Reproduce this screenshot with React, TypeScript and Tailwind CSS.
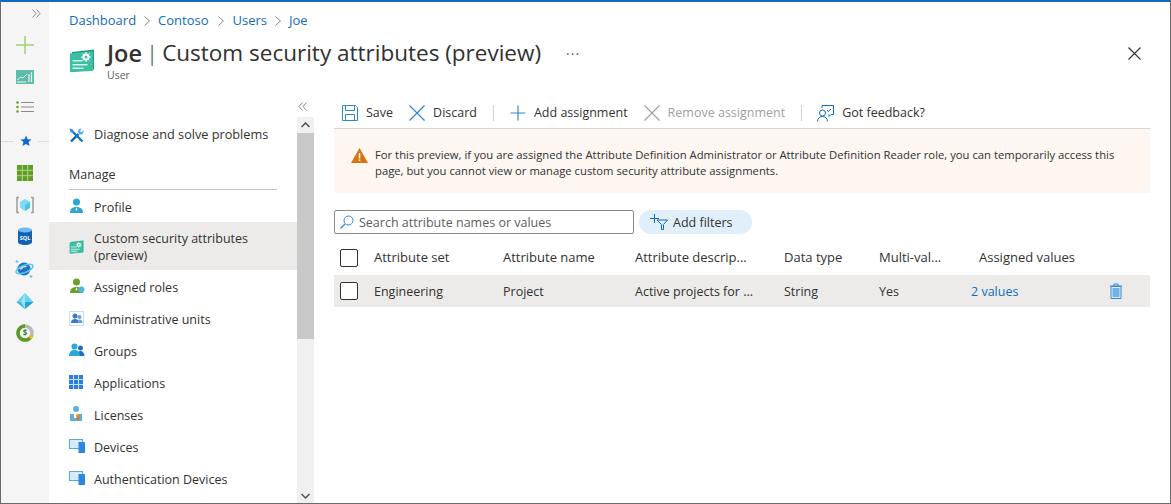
import { ReactNode } from "react";

const font = { fontFamily: '"Open Sans", "Noto Sans", sans-serif' };

function Chevron({ className = "mx-[7px]" }: { className?: string }) {
  return (
    <svg width="8" height="12" viewBox="0 0 8 12" className={className}>
      <path d="M1.5 1.5 6.5 6l-5 4.5" fill="none" stroke="#8a8886" strokeWidth="1" />
    </svg>
  );
}

function CardIcon({ size = 26 }: { size?: number }) {
  return (
    <svg width={size} height={size} viewBox="0 0 26 26">
      <path d="M3 5 25 2.5v20L3 25z" fill="#1c9a85" />
      <path d="M1 6.5 24 4v20L1 25z" fill="#3cc0a4" />
      <rect x="3.500" y="13" width="10" height="1.500" fill="#d8f5ee" />
      <rect x="3.500" y="17" width="15" height="1.500" fill="#d8f5ee" />
      <rect x="3.500" y="20.500" width="11" height="1.500" fill="#d8f5ee" />
      <circle cx="17" cy="10" r="3.500" fill="#fff" />
      <path d="M17 5v10M12 10h10M13.500 6.500l7 7M20.500 6.500l-7 7" stroke="#fff" strokeWidth="1" />
      <circle cx="17" cy="10" r="1.500" fill="#3cc0a4" />
    </svg>
  );
}

function RailIcons() {
  return (
    <div className="flex flex-col items-center">
      <div className="h-[30px] w-full pt-[7px] pl-[31px]">
        <svg width="9" height="9" viewBox="0 0 9 9">
          <path d="M.5.500 4 4.500.5 8.500M4.500.500 8 4.500l-3.500 4" fill="none" stroke="#8a8a8a" />
        </svg>
      </div>
      <div className="h-[32px] pt-[4px]">
        <svg width="18" height="18" viewBox="0 0 18 18">
          <path d="M9 0v18M0 9h18" stroke="#a3cf7a" strokeWidth="1.500" />
        </svg>
      </div>
      <div className="h-[30px] pt-[6px]">
        <svg width="18" height="14" viewBox="0 0 18 14">
          <rect width="18" height="14" fill="#5fbcaa" />
          <path d="M1 10l4-3 2 1 4-4" stroke="#d8f3ee" fill="none" />
          <path d="M1 12h9M13 12V4M15.500 12V2" stroke="#e6f7f3" strokeWidth="1.200" />
        </svg>
      </div>
      <div className="h-[32px] pt-[7px]">
        <svg width="18" height="12" viewBox="0 0 18 12">
          <path d="M5 1.500h13M5 6h13M5 10.500h13" stroke="#8a8a8a" strokeWidth="1.200" />
          <circle cx="1.500" cy="1.500" r="1.300" fill="#6a9e2f" />
          <circle cx="1.500" cy="6" r="1.300" fill="#6a9e2f" />
          <circle cx="1.500" cy="10.500" r="1.300" fill="#6a9e2f" />
        </svg>
      </div>
      <div className="flex h-[30px] w-full items-center">
        <div className="h-px w-[13px] bg-[#dcdcdc]" />
        <svg width="12" height="12" viewBox="0 0 12 12" className="mx-[6px]">
          <path d="M6 .5l1.600 3.700 4 .3-3 2.600.9 3.900L6 9l-3.500 2 .9-3.900-3-2.600 4-.3z" fill="#0f6cc9" />
        </svg>
        <div className="h-px flex-1 bg-[#dcdcdc]" />
      </div>
      <div className="h-[32px] pt-[9px]">
        <svg width="16" height="16" viewBox="0 0 16 16">
          <rect width="16" height="16" fill="#5e9e22" />
          <path d="M5.300 0v16M10.700 0v16M0 5.300h16M0 10.700h16" stroke="#b6d68d" />
        </svg>
      </div>
      <div className="h-[33px] pt-[8px]">
        <svg width="18" height="18" viewBox="0 0 18 18">
          <path d="M3 1.500H1v15h2M15 1.500h2v15h-2" fill="none" stroke="#9a9a9a" strokeWidth="1.500" />
          <path d="M9 3l5 2.800v6L9 15l-5-3.200v-6z" fill="#7fdcf5" />
          <path d="M9 9l5-3.200v6L9 15z" fill="#4cc3e8" />
        </svg>
      </div>
      <div className="h-[33px] pt-[6px]">
        <svg width="14" height="18" viewBox="0 0 14 18">
          <path d="M0 3v12c0 1.600 3 3 7 3s7-1.400 7-3V3z" fill="#0f62b5" />
          <ellipse cx="7" cy="3" rx="7" ry="2.500" fill="#6fbdf0" />
          <text x="7" y="12.500" textAnchor="middle" fontSize="5.500" fontWeight="700" fill="#fff">SQL</text>
        </svg>
      </div>
      <div className="h-[32px] pt-[5px]">
        <svg width="20" height="20" viewBox="0 0 20 20">
          <circle cx="9" cy="10" r="6.500" fill="#1f6fc4" />
          <path d="M4 9c2-3 6-3 8-1-3 0-5 1-6 3z" fill="#e8e8e8" />
          <ellipse cx="9.500" cy="10" rx="9" ry="3.500" transform="rotate(-22 9.500 10)" fill="none" stroke="#50c8ee" strokeWidth="1.500" />
          <path d="M2 1v3M.5 2.500h3M16 16v3M14.500 17.500h3" stroke="#50c8ee" />
        </svg>
      </div>
      <div className="h-[32px] pt-[6px]">
        <svg width="18" height="18" viewBox="0 0 18 18">
          <path d="M9 1 17.500 10 9 17 .5 10z" fill="#6ad2f3" />
          <path d="M9 1 5 10l4 7z" fill="#9fe4f8" />
          <path d="M.5 10H5l4 7z" fill="#3fb6e2" />
          <path d="M17.500 10 9 17V10z" fill="#2a9fd8" />
        </svg>
      </div>
      <div className="h-[32px] pt-[6px]">
        <svg width="18" height="18" viewBox="0 0 18 18">
          <circle cx="9" cy="9" r="7" fill="none" stroke="#b9b9b9" strokeWidth="3.500" />
          <path d="M9 2a7 7 0 0 0-2 13.700A7 7 0 0 0 14 14" fill="none" stroke="#5c9a1f" strokeWidth="3.500" />
          <path d="M14 14a7 7 0 0 0 2-3" fill="none" stroke="#f2b90f" strokeWidth="3.500" />
          <text x="9" y="12" textAnchor="middle" fontSize="8" fontWeight="700" fill="#3a7d44">$</text>
        </svg>
      </div>
    </div>
  );
}

function Person({ color, accent }: { color: string; accent?: ReactNode }) {
  return (
    <svg width="16" height="16" viewBox="0 0 16 16">
      <circle cx="7.500" cy="4" r="3.500" fill={color} />
      <path d="M1 15c0-4 2.500-6 6.500-6s6.500 2 6.500 6z" fill={color} />
      <path d="M7.500 9.500 6.500 11l1 2 1-2z" fill="#fff" />
      {accent}
    </svg>
  );
}

function Screen() {
  return (
    <svg width="16" height="14" viewBox="0 0 16 14">
      <rect x="0" y="0" width="14" height="10" fill="#5aa7e8" />
      <rect x="1" y="1" width="12" height="8" fill="#d6ecfb" />
      <rect x="9.500" y="3" width="6.500" height="11" rx="0.500" fill="#2f86e0" />
    </svg>
  );
}

const navItems: { label: ReactNode; icon: ReactNode; h?: string; active?: boolean }[] = [
  { label: "Profile", icon: <Person color="#2aa7d8" /> },
  {
    label: (
      <>
        Custom security attributes
        <br />
        (preview)
      </>
    ),
    icon: <CardIcon size={15} />,
    h: "h-[48px]",
    active: true,
  },
  {
    label: "Assigned roles",
    icon: <Person color="#6c9f2a" accent={<circle cx="12.500" cy="11.500" r="3" fill="#4bb8e6" />} />,
  },
  {
    label: "Administrative units",
    icon: (
      <svg width="15" height="15" viewBox="0 0 15 15">
        <rect x=".5" y=".5" width="14" height="14" fill="none" stroke="#8fb6e4" strokeDasharray="1 1" />
        <circle cx="6" cy="5" r="2.500" fill="#3c78c4" />
        <path d="M2 12c0-3 1.500-4 4-4s4 1 4 4z" fill="#3c78c4" />
        <circle cx="10.500" cy="6" r="2" fill="#6d9dd6" />
        <path d="M9 12c0-2 .5-3.500 1.500-3.500 2 0 3 1.500 3 3.500z" fill="#6d9dd6" />
      </svg>
    ),
  },
  {
    label: "Groups",
    icon: (
      <svg width="16" height="14" viewBox="0 0 16 14">
        <circle cx="11.500" cy="5" r="2.500" fill="#1e6fc0" />
        <path d="M8 13c0-3 1.500-5 3.500-5s4 2 4 5z" fill="#1e6fc0" />
        <circle cx="5.500" cy="3.500" r="3" fill="#2aa7d8" />
        <path d="M0 13c0-4 2-6 5.500-6s5.500 2 5.500 6z" fill="#2aa7d8" />
      </svg>
    ),
  },
  {
    label: "Applications",
    icon: (
      <svg width="14" height="14" viewBox="0 0 14 14">
        <rect width="14" height="14" fill="#2a7fe0" />
        <path d="M4.500 0v14M9.500 0v14M0 4.500h14M0 9.500h14" stroke="#cfe3f8" />
      </svg>
    ),
  },
  {
    label: "Licenses",
    icon: (
      <svg width="14" height="16" viewBox="0 0 14 16">
        <circle cx="7" cy="3" r="3" fill="#5fb0d8" />
        <path d="M1 15V8h12v7z" fill="#5fb0d8" />
        <path d="M5 8h4v4H5z" fill="#fff" />
        <circle cx="9" cy="10" r="2" fill="#e88a2a" />
        <path d="M8 11h2v4l-1-1-1 1z" fill="#d8701a" />
      </svg>
    ),
  },
  { label: "Devices", icon: <Screen /> },
  { label: "Authentication Devices", icon: <Screen /> },
];

function Sidebar() {
  return (
    <div className="flex w-[265px] shrink-0">
      <div className="flex min-w-0 flex-1 flex-col">
        <div className="h-[24px]" />
        <div className="flex h-[32px] items-center pl-[20px] text-[12.7px] text-[#323130]">
          <svg width="15" height="15" viewBox="0 0 15 15" className="mr-[10px]">
            <path d="M2 13.500 9.500 6" stroke="#1565b0" strokeWidth="2.400" />
            <path d="M13.500 13.500 4 4" stroke="#1a74c4" strokeWidth="2.400" />
            <path d="M.5.500 4 1.500 5 4 3.500 5 1.500 4z" fill="#2d8fd8" />
            <path d="M14.500 1.500c-.5 2-1.500 2.500-2.500 2.500l-1-1 1.500-2.500c-2-.5-4 1.500-3.500 4l2 2c2.500.5 4-1 3.500-5z" fill="#4fb3ea" />
          </svg>
          Diagnose and solve problems
        </div>
        <div className="mx-[20px] mt-[15px] flex h-[24px] items-start border-b border-[#c8c6c4] text-[12.5px] font-medium text-[#323130]">
          Manage
        </div>
        <div className="flex flex-col">
          {navItems.map((item, i) => (
            <div
              key={i}
              className={`flex ${item.h ?? "h-[32px]"} items-center pl-[20px] text-[12.5px] leading-[17px] text-[#323130] ${
                item.active ? "bg-[#edebe9]" : ""
              }`}
            >
              <span className="flex w-[25px] shrink-0 items-center">{item.icon}</span>
              <span className="pt-[2px]">{item.label}</span>
            </div>
          ))}
        </div>
      </div>
      <div className="flex w-[17px] shrink-0 flex-col">
        <div className="h-[22px] pt-[7px] pl-[1px]">
          <svg width="9" height="9" viewBox="0 0 9 9">
            <path d="M4.500.500 1 4.500l3.500 4M8.500.500 5 4.500l3.500 4" fill="none" stroke="#8a8a8a" />
          </svg>
        </div>
        <div className="flex flex-1 flex-col bg-[#f0f0f0]">
          <div className="flex h-[16px] items-center justify-center">
            <svg width="9" height="6" viewBox="0 0 9 6">
              <path d="M.5 5 4.500 1l4 4" fill="none" stroke="#505050" strokeWidth="1.500" />
            </svg>
          </div>
          <div className="h-[206px] bg-[#c8c8c8]" />
          <div className="flex-1" />
          <div className="flex h-[14px] items-center justify-center">
            <svg width="9" height="6" viewBox="0 0 9 6">
              <path d="M.5 1 4.500 5l4-4" fill="none" stroke="#505050" strokeWidth="1.500" />
            </svg>
          </div>
        </div>
      </div>
    </div>
  );
}

function ToolButton({ icon, label, muted }: { icon: ReactNode; label: string; muted?: boolean }) {
  return (
    <div className={`flex items-center text-[12.5px] ${muted ? "text-[#a19f9d]" : "text-[#323130]"}`}>
      <span className="mr-[8px] flex">{icon}</span>
      {label}
    </div>
  );
}

function Toolbar() {
  return (
    <div className="flex h-[34px] items-center border-b border-[#d8d6d4] pt-[3px] pl-[8px]">
      <ToolButton
        label="Save"
        icon={
          <svg width="16" height="16" viewBox="0 0 16 16">
            <path d="M.5.500h13l2 2v13H.5z" fill="none" stroke="#2b88d8" />
            <path d="M3.500.500v5h9v-5M3.500 15.500v-6h9v6" fill="none" stroke="#2b88d8" />
          </svg>
        }
      />
      <div className="ml-[16px]">
        <ToolButton
          label="Discard"
          icon={
            <svg width="16" height="16" viewBox="0 0 16 16">
              <path d="M.5.500l15 15M15.500.500l-15 15" stroke="#2b88d8" strokeWidth="1.200" />
            </svg>
          }
        />
      </div>
      <div className="mx-[16px] h-[16px] w-px bg-[#d2d0ce]" />
      <ToolButton
        label="Add assignment"
        icon={
          <svg width="16" height="16" viewBox="0 0 16 16">
            <path d="M8 .5v15M.5 8h15" stroke="#2b88d8" strokeWidth="1.200" />
          </svg>
        }
      />
      <div className="ml-[16px]">
        <ToolButton
          muted
          label="Remove assignment"
          icon={
            <svg width="16" height="16" viewBox="0 0 16 16">
              <path d="M.5.500l15 15M15.500.500l-15 15" stroke="#a19f9d" strokeWidth="1.200" />
            </svg>
          }
        />
      </div>
      <div className="mr-[15px] ml-[16px] h-[16px] w-px bg-[#d2d0ce]" />
      <ToolButton
        label="Got feedback?"
        icon={
          <svg width="17" height="17" viewBox="0 0 17 17">
            <circle cx="5.500" cy="8" r="3" fill="none" stroke="#0f6cbd" />
            <path d="M.5 16.500c0-3 2-5 5-5s5 2 5 5" fill="none" stroke="#0f6cbd" />
            <path d="M5 3V.5h11.500v9H14l-2 2v-2" fill="none" stroke="#0f6cbd" />
            <path d="M10 5l1.500 1.500L14 4" fill="none" stroke="#0f6cbd" />
          </svg>
        }
      />
    </div>
  );
}

function Checkbox() {
  return <div className="h-[18px] w-[18px] rounded-[2px] border border-[#323130] bg-white" />;
}

function Table() {
  const cols = "grid grid-cols-[40px_129px_132px_149px_95px_92px_138px_1fr] items-center";
  return (
    <div>
      <div className={`${cols} h-[41px] pt-[6px] text-[13px] font-medium text-[#323130]`}>
        <div className="pl-[6px]">
          <Checkbox />
        </div>
        <div>Attribute set</div>
        <div>Attribute name</div>
        <div>Attribute descrip...</div>
        <div>Data type</div>
        <div>Multi-val...</div>
        <div className="col-span-2 pl-[8px]">Assigned values</div>
      </div>
      <div className={`${cols} h-[32px] bg-[#edebe9] text-[12.5px] text-[#323130]`}>
        <div className="pl-[6px]">
          <Checkbox />
        </div>
        <div className="pt-[2px]">Engineering</div>
        <div className="pt-[2px]">Project</div>
        <div className="pt-[2px]">Active projects for ...</div>
        <div className="pt-[2px]">String</div>
        <div className="pt-[2px]">Yes</div>
        <div className="pt-[2px] text-[#0f6cbd]">2 values</div>
        <div className="flex">
          <svg width="14" height="16" viewBox="0 0 14 16">
            <path d="M1 3h12M5 3V1h4v2" fill="none" stroke="#2b88d8" />
            <path d="M2 3.500h10V15.500H2z" fill="none" stroke="#2b88d8" />
            <rect x="3.500" y="5" width="7" height="9" fill="#70b1e6" />
          </svg>
        </div>
      </div>
    </div>
  );
}

export default function App() {
  return (
    <div
      style={font}
      className="flex h-[504px] w-[1171px] overflow-hidden border-t-2 border-r border-b border-l border-t-[#0f6cbd] border-r-[#6b6b6b] border-b-[#6b6b6b] border-l-[#6b6b6b] bg-white"
    >
      <div className="w-[48px] shrink-0 bg-[#f5f5f5]">
        <RailIcons />
      </div>
      <div className="flex min-w-0 flex-1 flex-col">
        <div className="relative h-[93px] shrink-0 pl-[20px]">
          <div className="flex h-[36px] items-center pt-[2px] text-[13px] text-[#0f6cbd]">
            Dashboard
            <Chevron />
            Contoso
            <Chevron className="mx-[8px]" />
            Users
            <Chevron className="mx-[7px]" />
            Joe
          </div>
          <div className="flex">
            <div className="pt-[9px]">
              <CardIcon />
            </div>
            <div className="ml-[12px]">
              <div className="flex items-center text-[22.5px] leading-[30px] text-[#323130]">
                <span className="text-[23.5px] font-semibold">Joe</span>
                <span className="mx-[4px] font-light">|</span>
                <span>Custom security attributes (preview)</span>
                <span className="ml-[25px] -mt-[6px] text-[14px] tracking-[1px] text-[#605e5c]">...</span>
              </div>
              <div className="text-[10.5px] leading-[14px] text-[#605e5c]">User</div>
            </div>
          </div>
          <div className="absolute top-[45px] right-[29px]">
            <svg width="13" height="13" viewBox="0 0 13 13">
              <path d="M.5.500l12 12M12.500.500l-12 12" stroke="#323130" strokeWidth="1.100" />
            </svg>
          </div>
        </div>
        <div className="flex min-h-0 flex-1">
          <Sidebar />
          <div className="min-w-0 flex-1 pr-[20px] pl-[20px]">
            <Toolbar />
            <div className="flex h-[64px] items-start bg-[#fdf6f1] pt-[18px] pl-[17px]">
              <svg width="17" height="15" viewBox="0 0 17 15" className="mt-[1px] shrink-0">
                <path d="M8.500 0 17 15H0z" fill="#d9730d" />
                <path d="M7.700 5h1.600v5.500H7.700zM7.700 11.500h1.600V13H7.700z" fill="#fff" />
              </svg>
              <p className="ml-[7px] text-[11.27px] leading-[16px] text-[#323130]">
                For this preview, if you are assigned the Attribute Definition Administrator or Attribute Definition Reader role, you can temporarily access this
                <br />
                page, but you cannot view or manage custom security attribute assignments.
              </p>
            </div>
            <div className="mt-[17px] flex items-center">
              <div className="flex h-[24px] w-[300px] items-center rounded-[2px] border border-[#8a8886] pl-[5px] text-[12.5px] text-[#605e5c]">
                <svg width="14" height="14" viewBox="0 0 14 14" className="mr-[5px]">
                  <circle cx="8.500" cy="5.500" r="4.500" fill="none" stroke="#2b88d8" />
                  <path d="M5 9 .5 13.500" stroke="#2b88d8" strokeWidth="1.200" />
                </svg>
                <span className="pt-[2px]">Search attribute names or values</span>
              </div>
              <div className="ml-[5px] flex h-[24px] w-[113px] items-center rounded-full bg-[#e1effa] pl-[11px] text-[12.5px] text-[#323130]">
                <svg width="18" height="16" viewBox="0 0 18 16" className="mr-[5px] -mt-[1px]">
                  <path d="M4.500 0v9M0 4.500h9" stroke="#0f6cbd" />
                  <path d="M7 6h10.500l-4 4.500V15.500h-2V10.500z" fill="none" stroke="#0f6cbd" />
                </svg>
                <span className="pt-[2px]">Add filters</span>
              </div>
            </div>
            <Table />
          </div>
        </div>
      </div>
    </div>
  );
}
